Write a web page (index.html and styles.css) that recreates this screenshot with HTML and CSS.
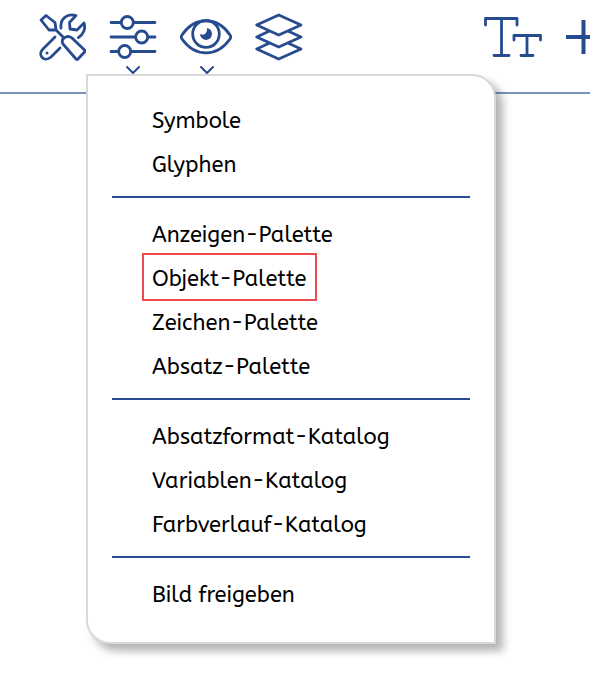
FILE: index.html
```html
<!DOCTYPE html>
<html lang="de">
<head>
  <meta charset="UTF-8">
  <meta name="viewport" content="width=device-width, initial-scale=1.0">
  <title>Paletten</title>
  <link rel="stylesheet" href="styles.css">
</head>
<body>

<header class="toolbar">
  <div class="tools">
    <button class="tool" type="button" aria-label="Werkzeuge">
      <svg class="icon" width="52" height="64" viewBox="0 0 52 64">
        <path d="M7 8 L12 3.5 L21 10.5 L22 18 L15 18 Z M22 18 L30 26"/>
        <path d="M29 32 Q27 28 30 26 Q34 23 38 26 L50.5 38 Q51.5 39 50.5 40 L44 47 Q43 48 42 47 Z"/>
        <path d="M27 16 C26 7 33 1 42 3.5 L35.5 10.5 L36 17 L43 18 L50 11 C52 17 49 23 44.5 25.5"/>
        <path d="M21 25 L9 37 C3 43 10 51 17 45 L26 36"/>
        <circle class="fill" cx="13" cy="41" r="1.5"/>
      </svg>
    </button>
    <button class="tool" type="button" aria-label="Paletten" aria-expanded="true">
      <svg class="icon" width="52" height="64" viewBox="0 0 52 64">
        <path d="M4 10.5 H14 M26.5 10.5 H48 M4 25 H28.5 M41 25 H48 M4 39.5 H11.5 M24 39.5 H48"/>
        <circle cx="20.3" cy="10.5" r="6"/>
        <circle cx="34.7" cy="25" r="6"/>
        <circle cx="17.7" cy="39.5" r="6"/>
        <path class="chevron" d="M20 55 L26 61 L32 55"/>
      </svg>
    </button>
    <button class="tool" type="button" aria-label="Ansicht">
      <svg class="icon" width="52" height="64" viewBox="0 0 52 64">
        <path d="M2 23 C15 4 37 4 50 23 Q51.5 25 50 27 C37 45.5 15 45.5 2 27 Q0.5 25 2 23 Z"/>
        <circle cx="26" cy="22" r="13.3"/>
        <path class="fill" d="M27 16 A6 6 0 1 1 20 22 Q24 23.5 25.5 21.5 Q27.5 19 27 16 Z"/>
        <path class="chevron" d="M21 55 L27 61 L33 55"/>
      </svg>
    </button>
    <button class="tool" type="button" aria-label="Ebenen">
      <svg class="icon" width="52" height="64" viewBox="0 0 52 64">
        <path d="M25.7 3 L48 13 L25.7 23 L3.7 13 Z"/>
        <path d="M15.5 19.5 L3.7 25 L25.7 35 L48 25 L36 19.5"/>
        <path d="M15.5 31.5 L3.7 37 L25.7 47 L48 37 L36 31.5"/>
      </svg>
    </button>
  </div>

  <div class="tools-right">
    <button class="tool" type="button" aria-label="Schrift">
      <svg class="icon" width="64" height="64" viewBox="0 0 64 64">
        <path d="M3.5 13 V6.5 H35 V13 M19.5 6.5 V43.5 M12 43.5 H27"/>
        <path d="M32 28 V23.500 H58.500 V28 M45 23.500 V43.5 M39 43.5 H51"/>
      </svg>
    </button>
    <button class="tool" type="button" aria-label="Hinzufügen">
      <svg class="icon plus" width="36" height="64" viewBox="0 0 36 64">
        <path d="M0 25 H35 M17.5 8 V42"/>
      </svg>
    </button>
  </div>

  <nav class="menu">
    <ul class="group">
      <li><a class="item" href="#">Symbole</a></li>
      <li><a class="item" href="#">Glyphen</a></li>
    </ul>
    <ul class="group">
      <li><a class="item" href="#">Anzeigen-Palette</a></li>
      <li><a class="item marked" href="#">Objekt-Palette</a></li>
      <li><a class="item" href="#">Zeichen-Palette</a></li>
      <li><a class="item" href="#">Absatz-Palette</a></li>
    </ul>
    <ul class="group">
      <li><a class="item" href="#">Absatzformat-Katalog</a></li>
      <li><a class="item" href="#">Variablen-Katalog</a></li>
      <li><a class="item" href="#">Farbverlauf-Katalog</a></li>
    </ul>
    <ul class="group">
      <li><a class="item" href="#">Bild freigeben</a></li>
    </ul>
  </nav>
</header>

</body>
</html>
```

FILE: styles.css
```css
* { box-sizing: border-box; }

body {
  margin: 0;
  min-height: 100vh;
  background: #fff;
  color: #000;
  font-family: ABeeZee, "Noto Sans", sans-serif;
  font-size: 22px;
}

.toolbar {
  position: relative;
  display: flex;
  justify-content: space-between;
  height: 94px;
  padding: 12px 0 0 34px;
  border-bottom: 2px solid #7c93be;
}
.tools { display: flex; gap: 21px; }
.tools-right {
  display: flex;
  gap: 20px;
  width: 108px;
  overflow: hidden;
}
.tool {
  flex: none;
  height: 64px;
  padding: 0;
  border: 0;
  background: none;
  cursor: pointer;
}

.icon {
  display: block;
  fill: none;
  stroke: #264b8f;
  stroke-width: 2.8;
  stroke-linecap: round;
  stroke-linejoin: round;
}
.icon .fill { fill: #264b8f; stroke: none; }
.icon .chevron { stroke-width: 2; }
.plus { stroke-width: 4; stroke-linecap: butt; }

/* dropdown */
.menu {
  position: absolute;
  top: 74px;
  left: 86px;
  width: 410px;
  padding: 21px 24px 27px;
  background: #fff;
  border: 2px solid #dbd8d9;
  border-radius: 0 24px 0 24px;
  box-shadow: 7px 7px 8px rgba(0, 0, 0, 0.3);
}
.group {
  margin: 0;
  padding: 0 0 0 32px;
  list-style: none;
}
.group + .group {
  margin-top: 11px;
  padding-top: 13px;
  border-top: 2px solid #264b8f;
}
.item {
  display: block;
  width: fit-content;
  padding: 4px 8px 0;
  line-height: 40px;
  color: inherit;
  text-decoration: none;
}
.marked { outline: 2px solid #ee4b50; }
```
